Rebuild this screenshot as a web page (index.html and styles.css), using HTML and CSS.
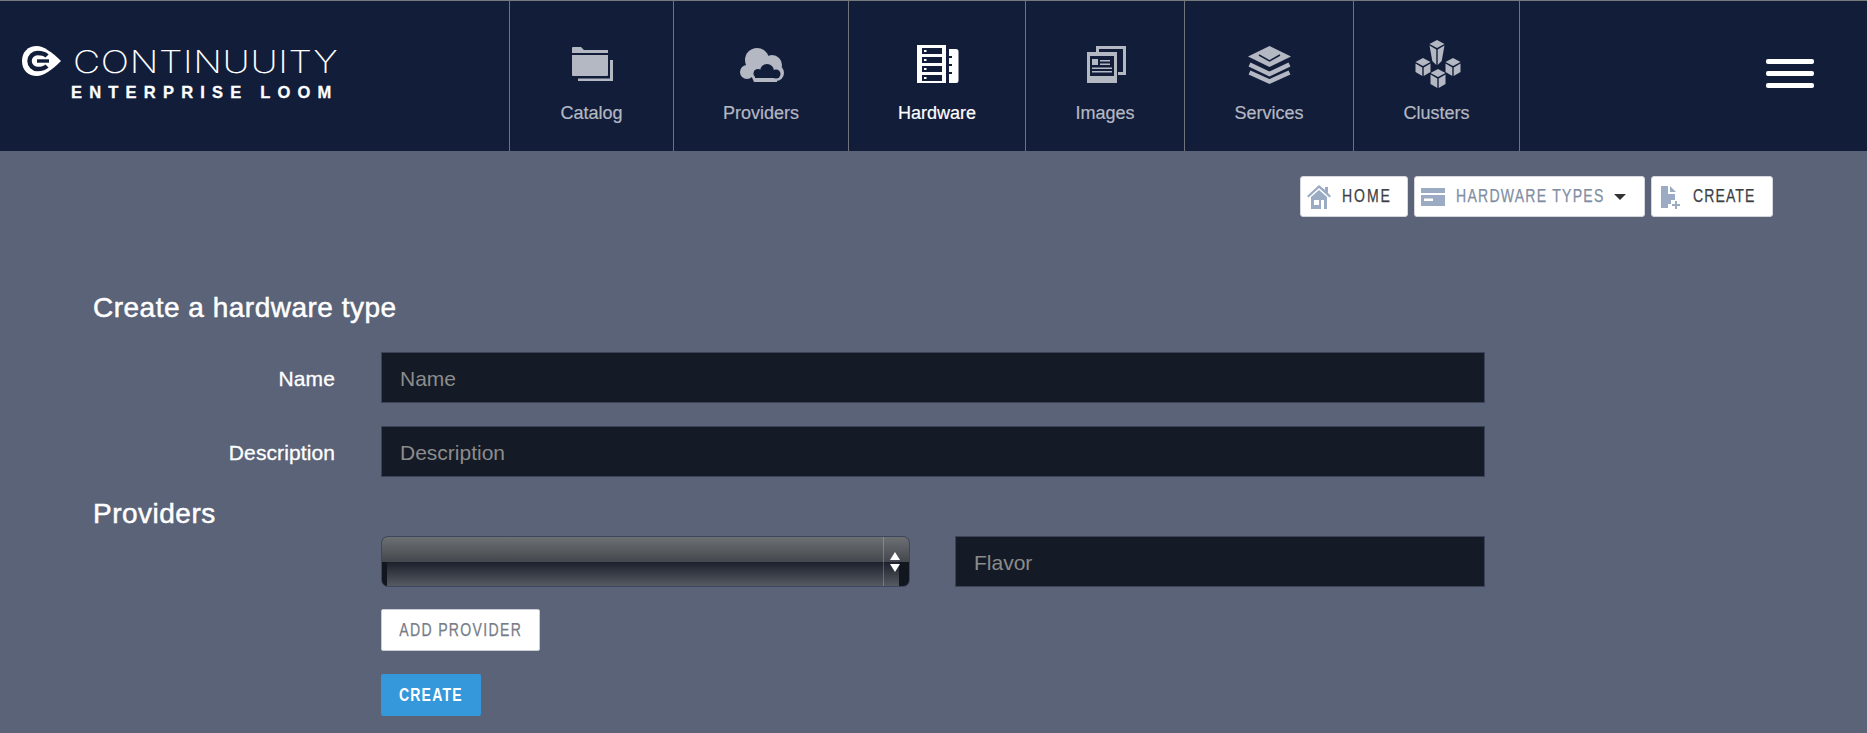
FILE: index.html
```html
<!DOCTYPE html>
<html lang="en">
<head>
<meta charset="utf-8">
<title>Continuuity Enterprise Loom</title>
<link rel="stylesheet" href="styles.css">
</head>
<body>
<header class="topbar">
  <a class="brand" href="#">
    <svg class="brand-mark" viewBox="0 0 39 30"><path fill="#fff" d="M15 0C21 0 30 6 39 15 30 24 21 30 15 30 6 30 0 24 0 15S6 0 15 0Z"/><path fill="none" stroke="#121d3a" stroke-width="4.500" d="M25 10C23 8 19.500 7 15.500 7A8 8 0 0 0 15.500 23C19.500 23 23 22 25 20"/><path fill="none" stroke="#121d3a" stroke-width="3.400" d="M15 15H27"/></svg>
    <span class="brand-text">
      <span class="brand-name">CONTINUUITY</span>
      <span class="brand-sub">ENTERPRISE LOOM</span>
    </span>
  </a>
  <nav class="nav">
    <a class="nav-item" href="#">
      <svg class="nav-icon" viewBox="0 0 48 48"><path d="M4 8a1 1 0 0 1 1-1h8l3 3h24v3H4Z"/><path d="M4 15h36v20a1 1 0 0 1-1 1H5a1 1 0 0 1-1-1Z"/><path d="M42 20h3v21H10v-2.500h32Z"/></svg>
      <span>Catalog</span>
    </a>
    <a class="nav-item" href="#">
      <svg class="nav-icon" viewBox="0 0 48 48"><circle cx="20" cy="20" r="12"/><circle cx="35" cy="25" r="10"/><circle cx="10" cy="32" r="7"/><circle cx="39" cy="33" r="8"/><path d="M10 26h30v16H17Z"/><circle cx="30" cy="31" r="7" class="cut"/><circle cx="21" cy="33.500" r="4.500" class="cut"/><circle cx="39" cy="34" r="4.500" class="cut"/><path class="cut" d="M18 33h24v5H18Z"/></svg>
      <span>Providers</span>
    </a>
    <a class="nav-item is-active" href="#">
      <svg class="nav-icon" viewBox="0 0 48 48"><path fill-rule="evenodd" d="M4 5h29v38H4ZM9 8v6h20V8Zm0 9v6h20v-6Zm0 9v6h20v-6Zm0 9v6h20v-6Z"/><path d="M11 10h2.500v2H11Zm0 9h2.500v2H11Zm0 9h2.500v2H11Zm0 9h2.500v2H11Z"/><path d="M36 9h7a2.500 2.500 0 0 1 2.500 2.500v29A2.500 2.500 0 0 1 43 43h-7v-9h3v-2h-3v-6h3v-2h-3v-6h3v-2h-3Z"/></svg>
      <span>Hardware</span>
    </a>
    <a class="nav-item" href="#">
      <svg class="nav-icon" viewBox="0 0 48 48"><path d="M15 6h30v29h-8v-3h5V9H18v3h-3Z"/><path fill-rule="evenodd" d="M6 12h30v31H6Zm3 4v20h24V16Z"/><path d="M11 19h6v6h-6Zm8 1h10v1.500H19Zm0 3.500h10V25H19ZM11 27.500h20V29H11Zm0 3.500h20v1.500H11Z"/></svg>
      <span>Images</span>
    </a>
    <a class="nav-item" href="#">
      <svg class="nav-icon" viewBox="0 0 48 48"><path d="M24.500 6 46 16.500 24.500 27 3 16.500Z"/><path class="cut-line" d="M14 15l10.500 6L35 15"/><path class="chev" d="M4.500 24.500l20 9.500 20-9.500"/><path class="chev" d="M4.500 32.500l20 9 20-9"/></svg>
      <span>Services</span>
    </a>
    <a class="nav-item" href="#">
      <svg class="nav-icon" viewBox="0 0 48 48"><path d="M24 0l7.500 4-7.500 4-7.500-4Zm-7.500 5.500 6.800 4v15.500l-4-4Zm15 0-6.800 4v15.500l4-4Z"/><path d="M10 18l7.500 4-7.500 4-7.500-4Zm-7.500 5.500 6.800 4v8.500l-6.800-4Zm15 0-6.800 4v8.500l6.800-4Z"/><path d="M40 18l7.500 4-7.500 4-7.500-4Zm-7.500 5.500 6.800 4v8.500l-6.800-4Zm15 0-6.800 4v8.500l6.800-4Z"/><path d="M25 29l7.500 4-7.500 4-7.500-4Zm-7.500 5.500 6.800 4v9.500l-6.800-4Zm15 0-6.800 4v9.500l6.800-4Z"/></svg>
      <span>Clusters</span>
    </a>
  </nav>
  <button class="menu-toggle" type="button" aria-label="Menu"><i></i><i></i><i></i></button>
</header>

<div class="toolbar">
  <a class="tool-btn tool-home" href="#">
    <svg class="tool-icon" viewBox="0 0 24 24"><path d="M12 0 18 5V2h3v6l3 3-1.500 1.500L12 3 1.500 12.500 0 11Z"/><path fill-rule="evenodd" d="M4 12 12 5l8 7v12H4Zm3 3v5h5v-5Zm7 0v9h3v-9Z"/></svg>
    <span class="tool-label">HOME</span>
  </a>
  <a class="tool-btn tool-btn-muted tool-types" href="#">
    <svg class="tool-icon tool-icon-wide" viewBox="0 0 24 18"><path d="M0 0h24v5H0Z"/><path fill-rule="evenodd" d="M0 7h24v11H0Zm3 3.500v2.500h9v-2.500Z"/></svg>
    <span class="tool-label">HARDWARE TYPES</span>
    <i class="caret"></i>
  </a>
  <a class="tool-btn tool-create" href="#">
    <svg class="tool-icon" viewBox="0 0 24 24"><path d="M3 1h7v8h7v6h-4v4h-3v4H3Z"/><path d="M12 1l6 6h-6Z"/><path d="M17 16h2v3h3v2h-3v3h-2v-3h-3v-2h3Z"/></svg>
    <span class="tool-label">CREATE</span>
  </a>
</div>

<main class="content">
  <h2 class="section-title title-first">Create a hardware type</h2>
  <form class="form">
    <div class="form-row">
      <label class="form-label" for="f-name">Name</label>
      <input class="field field-full" id="f-name" placeholder="Name">
    </div>
    <div class="form-row">
      <label class="form-label" for="f-desc">Description</label>
      <input class="field field-full" id="f-desc" placeholder="Description">
    </div>
    <h2 class="section-title">Providers</h2>
    <div class="provider-row">
      <div class="select-wrap">
        <select class="select" aria-label="Provider"></select>
        <svg class="select-arrows" viewBox="0 0 10 20"><path d="M5 0l5 8H0Z"/><path d="M0 12h10l-5 8Z"/></svg>
      </div>
      <input class="field field-flavor" placeholder="Flavor">
    </div>
    <button class="btn btn-light" type="button"><span class="btn-label">ADD PROVIDER</span></button>
    <button class="btn btn-primary" type="button"><span class="btn-label">CREATE</span></button>
  </form>
</main>
</body>
</html>
```
FILE: styles.css
```css
* { box-sizing: border-box; }
html, body { margin: 0; height: 100%; }
body {
  background: #5b6378;
  color: #fff;
  font-family: "Liberation Sans", Arial, sans-serif;
  overflow: hidden;
}
a { text-decoration: none; color: inherit; }

.topbar {
  height: 151px;
  background: #121d3a;
  border-top: 1px solid #77797a;
  display: flex;
  align-items: stretch;
}
.brand {
  width: 509px;
  flex: none;
  display: flex;
  align-items: flex-start;
  padding: 45px 0 0 22px;
}
.brand-mark { width: 39px; height: 30px; flex: none; }
.brand-text { display: flex; flex-direction: column; margin-left: 10px; margin-top: -1px; }
.brand-name {
  font-family: "Inter", sans-serif;
  font-weight: 200;
  font-size: 31px;
  line-height: 34px;
  letter-spacing: 0.5px;
  margin-left: 2px;
  white-space: nowrap;
  transform: scaleX(1.21);
  transform-origin: left center;
}
.brand-sub {
  font-weight: 700;
  font-size: 16.500px;
  line-height: 18px;
  letter-spacing: 7.200px;
  white-space: nowrap;
  margin-top: 4px;
  -webkit-text-stroke: 0.3px #fff;
}

.nav {
  display: grid;
  grid-template-columns: 164px 175px 177px 159px 169px 166px;
  border-right: 1px solid #70737c;
}
.nav-item {
  border-left: 1px solid #70737c;
  display: flex;
  flex-direction: column;
  align-items: center;
  padding-top: 39px;
  color: #b4b8c3;
  font-size: 18px;
  line-height: 20px;
  -webkit-text-stroke: 0.2px currentColor;
}
.nav-item.is-active { color: #fff; }
.nav-icon { width: 48px; height: 48px; fill: currentColor; margin-bottom: 15px; }
.cut { fill: #121d3a; }
.cut-line { fill: none; stroke: #121d3a; stroke-width: 1.500; }
.chev { fill: none; stroke: currentColor; stroke-width: 4.500; }

.menu-toggle {
  margin: 58px 53px 0 auto;
  width: 48px;
  height: 29px;
  padding: 0;
  border: 0;
  background: none;
  display: flex;
  flex-direction: column;
  justify-content: space-between;
}
.menu-toggle i { display: block; height: 5px; border-radius: 2px; background: #fff; }

.toolbar {
  display: flex;
  justify-content: flex-end;
  gap: 6px;
  padding: 25px 94px 0 0;
}
.tool-btn {
  height: 41px;
  background: #fff;
  border-radius: 3px;
  border: 1px solid #d5d7dc;
  display: flex;
  align-items: center;
  padding: 0 18px 0 6px;
  color: #3d3f45;
  font-size: 18px;
  letter-spacing: 2.500px;
}
.tool-home { width: 108px; }
.tool-types { width: 231px; letter-spacing: 1.600px; }
.tool-create { width: 122px; letter-spacing: 1.400px; }
.tool-label {
  width: 0;
  white-space: nowrap;
  transform: scaleX(.78);
  transform-origin: left center;
  -webkit-text-stroke: 0.25px currentColor;
}
.tool-btn-muted { color: #7f8ea3; }
.tool-icon { width: 24px; height: 24px; fill: #9babc3; margin-right: 11px; flex: none; }
.tool-icon-wide { height: 18px; }
.caret {
  border-top: 6px solid #333;
  border-left: 6px solid transparent;
  border-right: 6px solid transparent;
  margin-left: auto;
}

.content { padding-left: 93px; }
.section-title {
  margin: 22px 0 7px;
  font-size: 28px;
  line-height: 30px;
  letter-spacing: 0.5px;
  font-weight: 400;
  -webkit-text-stroke: 0.5px #fff;
}
.title-first { margin: 76px 0 29px; }
.form { display: flex; flex-direction: column; align-items: flex-start; }
.form-row { display: flex; align-items: center; margin-bottom: 23px; }
.form-row + .section-title { margin-top: -1px; }
.form-label {
  width: 242px;
  margin-right: 46px;
  text-align: right;
  font-size: 21px;
  letter-spacing: 0.1px;
  -webkit-text-stroke: 0.3px #fff;
  padding-top: 2px;
}
.field {
  height: 51px;
  background: #141b26;
  border: 1px solid #3a4358;
  padding: 2px 18px 0;
  color: #fff;
  font-family: "Liberation Sans", sans-serif;
  font-size: 21px;
  outline: none;
  border-radius: 0;
}
.field::placeholder { color: #8c8c8c; opacity: 1; }
.field-full { width: 1104px; }
.field-flavor { width: 530px; margin-left: 45px; }

.provider-row { display: flex; margin-left: 288px; margin-bottom: 22px; }
.select-wrap { position: relative; width: 529px; height: 51px; }
.select {
  appearance: none;
  -webkit-appearance: none;
  display: block;
  width: 100%;
  height: 100%;
  border: 1px solid #3c465c;
  border-radius: 7px;
  outline: none;
  background:
    linear-gradient(#6c7073 0, #45494f 50%, transparent 50%) no-repeat,
    linear-gradient(90deg, #12161f 5px, transparent 5px, transparent 517px, #12161f 517px) no-repeat,
    linear-gradient(#1a1f2b 50%, #565a61 100%) no-repeat;
}
.select-wrap::after {
  content: "";
  position: absolute;
  top: 1px;
  bottom: 1px;
  right: 26px;
  width: 1px;
  background: rgba(255,255,255,.22);
}
.select-arrows {
  position: absolute;
  top: 16px;
  right: 10px;
  width: 10px;
  height: 20px;
  fill: #fff;
}

.btn {
  height: 42px;
  border-radius: 2px;
  margin-left: 288px;
  font-family: "Liberation Sans", sans-serif;
  font-size: 18px;
  padding: 0;
  display: flex;
  align-items: center;
  justify-content: center;
}
.btn-label { white-space: nowrap; transform: scaleX(.78); flex: none; }
.btn-light {
  width: 159px;
  background: #fff;
  border: 1px solid #c9ccd2;
  color: #767d88;
  margin-bottom: 23px;
  letter-spacing: 1.700px;
  -webkit-text-stroke: 0.25px currentColor;
}
.btn-primary {
  width: 100px;
  background: #3498db;
  border: 0;
  color: #fff;
  font-weight: 700;
  letter-spacing: 1.500px;
}
```
